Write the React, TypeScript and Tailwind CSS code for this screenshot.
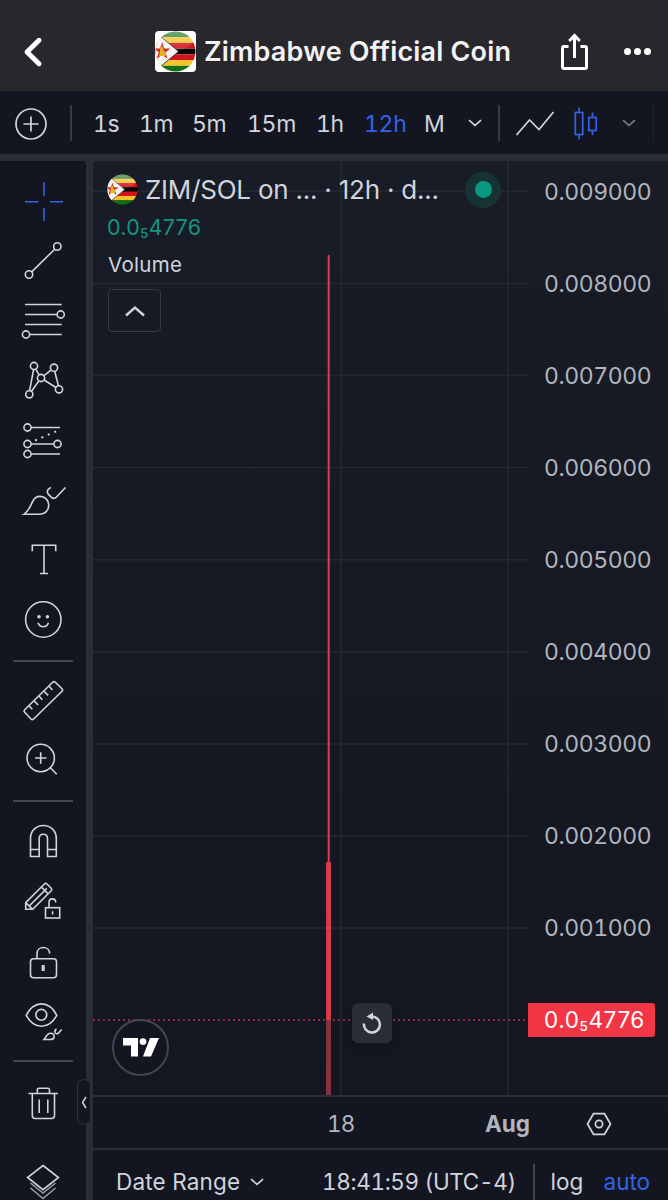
import { ReactNode } from "react";

const PRICES = [
  "0.009000",
  "0.008000",
  "0.007000",
  "0.006000",
  "0.005000",
  "0.004000",
  "0.003000",
  "0.002000",
  "0.001000",
];

const INTERVALS = [
  { label: "1s", className: "w-[46px]" },
  { label: "1m", className: "w-[53px]" },
  { label: "5m", className: "w-[55px]" },
  { label: "15m", className: "w-[69px]" },
  { label: "1h", className: "w-[48px]" },
  { label: "12h", className: "w-[60px] text-[#3363e4]" },
  { label: "M", className: "w-[41px]" },
];

function Flag({ className }: { className: string }) {
  return (
    <svg viewBox="0 0 40 40" className={className}>
      <defs>
        <clipPath id="flagClip">
          <circle cx="20" cy="20" r="19.5" />
        </clipPath>
        <linearGradient id="flagShine" x1="0" y1="0" x2="0" y2="1">
          <stop offset="0" stopColor="#fff" stopOpacity="0.35" />
          <stop offset="1" stopColor="#fff" stopOpacity="0.08" />
        </linearGradient>
      </defs>
      <g clipPath="url(#flagClip)">
        <rect width="40" height="6" fill="#2f7d32" />
        <rect y="6" width="40" height="5.6" fill="#f2c32b" />
        <rect y="11.6" width="40" height="5.6" fill="#d3121d" />
        <rect y="17.2" width="40" height="5.6" fill="#0c0606" />
        <rect y="22.8" width="40" height="5.6" fill="#d3121d" />
        <rect y="28.4" width="40" height="5.6" fill="#f2c32b" />
        <rect y="34" width="40" height="6" fill="#107016" />
        <path d="M5 5L23 20L5 35L-4 38V2Z" fill="#f4f4f2" stroke="#241d1d" strokeWidth="0.8" />
        <path
          d="M7 10.5L9 17H15L10.3 20.8L12.2 27L7 23.2L1.8 27L3.7 20.8L-1 17H5Z"
          fill="#d6281f"
        />
        <path d="M5 17L7 14.500L8.500 19L10.500 21V24.500H4L5 20Z" fill="#e4b12b" />
        <ellipse cx="20" cy="8" rx="17" ry="11" fill="url(#flagShine)" />
      </g>
    </svg>
  );
}

function Chevron({ className }: { className: string }) {
  return (
    <svg viewBox="0 0 14 8" className={className} fill="none" stroke="currentColor" strokeWidth="1.7">
      <path d="M1 1.2L7 6.3L13 1.2" />
    </svg>
  );
}

function Tool({ children, className = "text-[#d1d4dc]" }: { children: ReactNode; className?: string }) {
  return (
    <button className={`block h-[60px] w-[86px] shrink-0 ${className}`}>
      <svg width="86" height="60" viewBox="0 0 86 60" fill="none" stroke="currentColor" strokeWidth="1.6">
        {children}
      </svg>
    </button>
  );
}

function ToolDivider() {
  return (
    <div className="flex h-5 shrink-0 items-center px-[13px]">
      <div className="h-[2px] w-[60px] bg-[#434651]" />
    </div>
  );
}

function Header() {
  return (
    <header className="flex h-[91px] shrink-0 items-center bg-[#28272c] pt-[12px] text-white">
      <svg width="155" height="40" viewBox="0 0 155 40" fill="none" stroke="currentColor">
        <path d="M39 8.3L27 20L39 31.7" strokeWidth="5" strokeLinecap="round" strokeLinejoin="round" />
      </svg>
      <div className="flex size-[41px] items-center justify-center rounded bg-white">
        <Flag className="size-[41px]" />
      </div>
      <h1 className="ml-2 mt-[2px] w-[350px] whitespace-nowrap text-[27px] font-semibold tracking-[0.190px] text-[#f3f2f5]">
        Zimbabwe Official Coin
      </h1>
      <svg width="100" height="40" viewBox="0 0 100 40" fill="none" stroke="currentColor" className="ml-[6px]">
        <path d="M8.500 14.500H4Q2.500 14.500 2.500 16V35Q2.500 36.500 4 36.500H25Q26.500 36.500 26.500 35V16Q26.500 14.500 25 14.500H20.500" strokeWidth="3" />
        <path d="M14.500 26V5" strokeWidth="3" />
        <path d="M9.200 9L14.500 3.500L19.800 9" strokeWidth="3" />
        <g fill="currentColor" stroke="none">
          <circle cx="67.500" cy="19.500" r="3.500" />
          <circle cx="77.500" cy="19.500" r="3.500" />
          <circle cx="87.500" cy="19.500" r="3.500" />
        </g>
      </svg>
    </header>
  );
}

function IntervalBar() {
  return (
    <nav className="flex h-[63px] shrink-0 items-center bg-[#131621] text-[#d1d4dc]">
      <svg width="70" height="40" viewBox="0 0 70 40" fill="none" stroke="currentColor" strokeWidth="1.7">
        <circle cx="31" cy="21" r="15" />
        <path d="M23.500 21H38.500M31 13.500V28.500" />
      </svg>
      <div className="h-9 w-[2px] bg-[#363a45]" />
      <div className="flex pl-[21px] text-[23px] leading-8 tabular-nums tracking-[-0.300px]">
        {INTERVALS.map((item) => (
          <button key={item.label} className={`mt-[2px] shrink-0 text-left ${item.className}`}>
            {item.label}
          </button>
        ))}
      </div>
      <Chevron className="ml-[3px] h-2 w-[14px]" />
      <div className="ml-[16px] h-9 w-[2px] bg-[#363a45]" />
      <svg width="100" height="40" viewBox="0 0 100 40" fill="none" stroke="currentColor" strokeWidth="1.7">
        <path d="M16.500 32L29.500 17L39 26.500L53.500 9" />
        <g stroke="#3363e4">
          <path d="M79 4.500V9.500M79 31.500V36.500M92.500 9.500V14.500M92.500 27.500V32" />
          <rect x="75.300" y="9.500" width="7.400" height="22" />
          <rect x="88.800" y="14.500" width="7.400" height="13" />
        </g>
      </svg>
      <Chevron className="ml-[22px] h-2 w-[14px] text-[#787b86]" />
      <div className="ml-[17px] h-9 w-px bg-[#1f232e]" />
    </nav>
  );
}

function DrawingTools() {
  return (
    <aside className="flex w-[86px] shrink-0 flex-col overflow-hidden rounded-tr bg-[#131621] pt-[10px]">
      <Tool className="text-[#3363e4]">
        <path d="M44 11.300V25M44 36.700V50M25 30.700H38.300M50 30.700H63" />
      </Tool>
      <Tool>
        <circle cx="57.300" cy="15.500" r="3.700" />
        <circle cx="29" cy="43.500" r="3.700" />
        <path d="M54.700 18.200L31.700 40.900" />
      </Tool>
      <Tool>
        <path d="M25 13.500H61.700M25 23.500H57M25 33.500H61.700M30 43.500H61.700" />
        <circle cx="60.700" cy="23.500" r="3.600" />
        <circle cx="26" cy="43.500" r="3.600" />
      </Tool>
      <Tool>
        <path d="M29.600 39.500L33.600 18.700M36 18.300L39 23.800M44 24.700L51.300 18.900M54.700 20.200L58.400 34.800M44.100 29L55.900 36.500M38.800 30L31.500 40.300" />
        <circle cx="29.300" cy="43.300" r="3.600" />
        <circle cx="34" cy="15" r="3.600" />
        <circle cx="41" cy="27" r="3.600" />
        <circle cx="54" cy="16.700" r="3.600" />
        <circle cx="59" cy="38.300" r="3.600" />
      </Tool>
      <Tool>
        <path d="M31.200 16.500H60M31.200 33H53.800M31.200 43H60" />
        <path d="M35 29.500L57 20" strokeWidth="2" strokeDasharray="2 5" />
        <circle cx="27.500" cy="16.500" r="3.600" />
        <circle cx="27.500" cy="33" r="3.600" />
        <circle cx="57.500" cy="33" r="3.600" />
        <circle cx="27.500" cy="43" r="3.600" />
      </Tool>
      <Tool>
        <path d="M24 43.300C29.500 39.500 30.500 34 33 30C34.500 27 37 25.400 40 25.400C45 25.400 48.700 29.300 48.700 34C48.700 39.300 45 43.300 40 43.300Z" />
        <path d="M51 16.500C46.500 18.500 46.500 21.500 48.700 23.600L51.500 26.400Q54 28.500 56.500 26L65.500 16.500" />
      </Tool>
      <Tool>
        <path d="M32.300 20.300V14.300H55.700V20.300M44 14.300V42.500M40 42.500H48" />
      </Tool>
      <Tool>
        <circle cx="43.300" cy="28.500" r="17.700" />
        <circle cx="39" cy="25.800" r="1.800" fill="currentColor" stroke="none" />
        <circle cx="47.400" cy="25.800" r="1.800" fill="currentColor" stroke="none" />
        <path d="M38 31.800Q39.500 35.800 43.200 35.800Q47 35.800 48.500 31.800" />
      </Tool>
      <ToolDivider />
      <Tool>
        <path d="M52.700 11.300Q54 10 55.300 11.300L62 17.700Q63.300 19 62 20.300L33.600 48Q32.300 49.300 31 48L24.700 41.300Q23.400 40 24.700 38.700Z" />
        <path d="M29 34.700L32.300 38.300M34 29.900L38.200 34M39 25L42.300 28.700M44 20.200L48.200 24.400M49.200 15.300L52.500 19" />
      </Tool>
      <Tool>
        <circle cx="40.700" cy="27" r="13.700" />
        <path d="M35 27H46.400M40.700 21.300V32.700M50.300 36.700L56.800 43.200" />
      </Tool>
      <ToolDivider />
      <Tool>
        <path d="M30.500 45.500V27.500C30.500 20 36 14.500 43.300 14.500C50.700 14.500 56.300 20 56.300 27.500V45.500H47.500V27.500C47.500 21.800 39.200 21.800 39.200 27.500V45.500ZM30.500 38.500H39.200M47.500 38.500H56.300" />
      </Tool>
      <Tool>
        <path d="M25.700 38.300V31.700L44.400 13Q45.700 11.700 47 13L51.200 17.200Q52.500 18.500 51.200 19.800L32.700 38.300ZM25.700 31.700L32.700 38.300M29.200 35L46.800 17.400M41.300 16L48.200 22.900" />
        <rect x="45.500" y="36.700" width="14.200" height="10.300" />
        <path d="M49 36.700V31.500C49 26.600 55.700 26.600 55.700 31.500M52.600 40.300V43.500" />
      </Tool>
      <Tool>
        <rect x="30.500" y="27.700" width="26" height="19" rx="3" />
        <path d="M37 27.700V22.500C37 14.500 49.600 14.500 49.600 22.500" />
        <path d="M43.200 34V40" strokeWidth="3" />
      </Tool>
      <Tool>
        <path d="M26.200 24.300C34 9 49 9 56.800 24.300C49 38.800 34 38.800 26.200 24.300Z" />
        <circle cx="41.300" cy="23.800" r="5.400" />
        <path d="M44 48.500C46.500 46 46.500 42.200 50.500 42.200C55.500 42.200 55.500 48.500 50 48.500ZM56.500 38C53.300 40 55.500 43.800 58 42.500L61.700 38.500" />
      </Tool>
      <ToolDivider />
      <Tool>
        <path d="M28.500 22.500H58M37.300 22.500V19Q37.300 17.300 39 17.300H47.700Q49.500 17.300 49.500 19V22.500M32.300 22.500V44.500Q32.300 47.500 35.300 47.500H51.500Q54.500 47.500 54.500 44.500V22.500M39.200 28.500V42M47.800 28.500V42" />
      </Tool>
      <div className="h-5 shrink-0" />
      <Tool>
        <path d="M43 14.500L58.500 26.500L43 38.700L27.500 26.500Z" />
        <path d="M30.500 32L43 42L55.500 32M30.500 37L43 47.500L55.500 37" className="text-[#9a9da7]" stroke="currentColor" />
      </Tool>
    </aside>
  );
}

function TinyPrice() {
  return (
    <>
      0.0<span className="relative top-[3px] text-[13.500px] font-medium">5</span>4776
    </>
  );
}

function Plot() {
  return (
    <svg width="436" height="935" viewBox="0 0 436 935" className="shrink-0">
      <g stroke="#242832" strokeWidth="1.500">
        {PRICES.map((price, i) => (
          <line key={price} x1="0" x2="436" y1={30.3 + i * 92.1} y2={30.3 + i * 92.1} />
        ))}
        <line x1="248" x2="248" y1="0" y2="935" />
        <line x1="415" x2="415" y1="0" y2="935" />
      </g>
      <rect x="233" y="701" width="5" height="158" fill="#cf3a48" />
      <rect x="233" y="859" width="5" height="76" fill="#85323f" />
      <rect x="234.700" y="94" width="2" height="765" fill="#dc3d4b" />
      <line x1="0" x2="436" y1="859" y2="859" stroke="#b83447" strokeWidth="1.700" strokeDasharray="2 3" />
    </svg>
  );
}

function Legend() {
  return (
    <div className="absolute left-[14px] top-0 text-[#d1d4dc]">
      <div className="flex h-[57px] items-center">
        <Flag className="size-[31px]" />
        <span className="ml-[7px] w-[320px] whitespace-nowrap text-[26px] tracking-[-0.230px]">
          ZIM/SOL on ... · 12h · d...
        </span>
        <span className="flex size-9 items-center justify-center rounded-full bg-[#163235]">
          <span className="size-[17px] rounded-full bg-[#089981]" />
        </span>
      </div>
      <div className="h-[31px] text-[21.500px] leading-[18px] tracking-[0.250px] text-[#14957f]">
        <TinyPrice />
      </div>
      <div className="h-[40px] pl-[1px] text-[20.500px] leading-[32px] tracking-[0.300px]">Volume</div>
      <button className="ml-px flex h-[43px] w-[53px] items-center justify-center rounded border-[1.500px] border-[#363a45]">
        <svg width="22" height="12" viewBox="0 0 22 12" fill="none" stroke="currentColor" strokeWidth="2.400">
          <path d="M2 10.500L11 2.500L20 10.500" />
        </svg>
      </button>
    </div>
  );
}

function Chart() {
  return (
    <main className="relative ml-[7px] flex w-[575px] shrink-0 flex-col rounded-tl bg-linear-to-b from-[#181c27] to-[#131621]">
      <div className="flex h-[935px] overflow-hidden">
        <Plot />
        <div className="-mt-[15px] pl-[15px] text-[23px] tabular-nums tracking-[-0.420px] text-[#b2b5be]">
          {PRICES.map((price) => (
            <div key={price} className="flex h-[92.050px] items-center">
              {price}
            </div>
          ))}
        </div>
      </div>

      <Legend />

      <div className="absolute left-[435px] top-[842px] flex h-[34px] w-[127px] items-center rounded-r-[3px] bg-[#f23645] pl-[16px] text-[22.500px] tracking-[0.600px] text-white">
        <span>
          <TinyPrice />
        </span>
      </div>
      <button className="absolute left-[259px] top-[842px] flex size-10 items-center justify-center rounded-[6px] bg-[#2a2d38] text-[#d1d4dc] shadow-md">
        <svg width="24" height="24" viewBox="0 0 24 24" fill="none" stroke="currentColor" strokeWidth="2.500">
          <path d="M4 12.500A8 8 0 1 0 12 5.500H10" />
          <path d="M6.500 5.500L13 1.500V9Z" fill="currentColor" stroke="none" />
        </svg>
      </button>
      <div className="absolute left-[19px] top-[858px] flex size-[57px] items-center justify-center rounded-full border-2 border-[#434651] bg-[#131621]">
        <svg width="36" height="19" viewBox="0 0 36 19" fill="#fff">
          <path d="M0 0H15V18.500H8V7.500H0Z" />
          <circle cx="20" cy="3.600" r="3.400" />
          <path d="M27 0H36L28 18.500H20Z" />
        </svg>
      </div>

      <div className="flex h-[53px] shrink-0 items-center border-t-2 border-[#2a2e39] pt-[2px] text-[22.500px] text-[#b2b5be]">
        <span className="w-[392px] pl-[234px] tabular-nums tracking-[-0.800px]">18</span>
        <span className="w-[101px] font-bold">Aug</span>
        <svg width="26" height="24" viewBox="0 0 26 24" fill="none" stroke="#d1d4dc" strokeWidth="1.700">
          <path d="M7.500 1.700H18.500L24.500 12L18.500 22.300H7.500L1.500 12Z" />
          <circle cx="13" cy="12" r="3.600" />
        </svg>
      </div>
      <div className="flex h-[52px] shrink-0 items-center border-t-2 border-[#2a2e39] pt-[14px] text-[22.500px] text-[#d1d4dc]">
        <button className="flex w-[229px] items-center whitespace-nowrap pl-[23px] tracking-[0.150px]">
          Date Range
          <Chevron className="ml-[10px] h-2 w-[14px]" />
        </button>
        <span className="w-[211px] whitespace-nowrap tabular-nums tracking-[-0.350px]">18:41:59 (UTC-4)</span>
        <span className="h-[36px] w-[1.500px] bg-[#434651]" />
        <span className="ml-[16px] w-[53px]">log</span>
        <span className="text-[#3363e4]">auto</span>
      </div>
    </main>
  );
}

export default function App() {
  return (
    <div className="flex h-[1200px] w-[668px] flex-col overflow-hidden bg-[#2a2d38] font-['Inter',sans-serif]">
      <Header />
      <IntervalBar />
      <div className="relative mt-[7px] flex min-h-0 flex-1">
        <DrawingTools />
        <Chart />
        <button className="absolute left-[77px] top-[918px] flex h-[46px] w-[14px] items-center justify-center rounded-[7px] border-[1.500px] border-[#2f333e] bg-[#131621] text-[#d1d4dc]">
          <svg width="6" height="13" viewBox="0 0 6 13" fill="none" stroke="currentColor" strokeWidth="1.500">
            <path d="M5 1L1.500 6.500L5 12" />
          </svg>
        </button>
      </div>
    </div>
  );
}
